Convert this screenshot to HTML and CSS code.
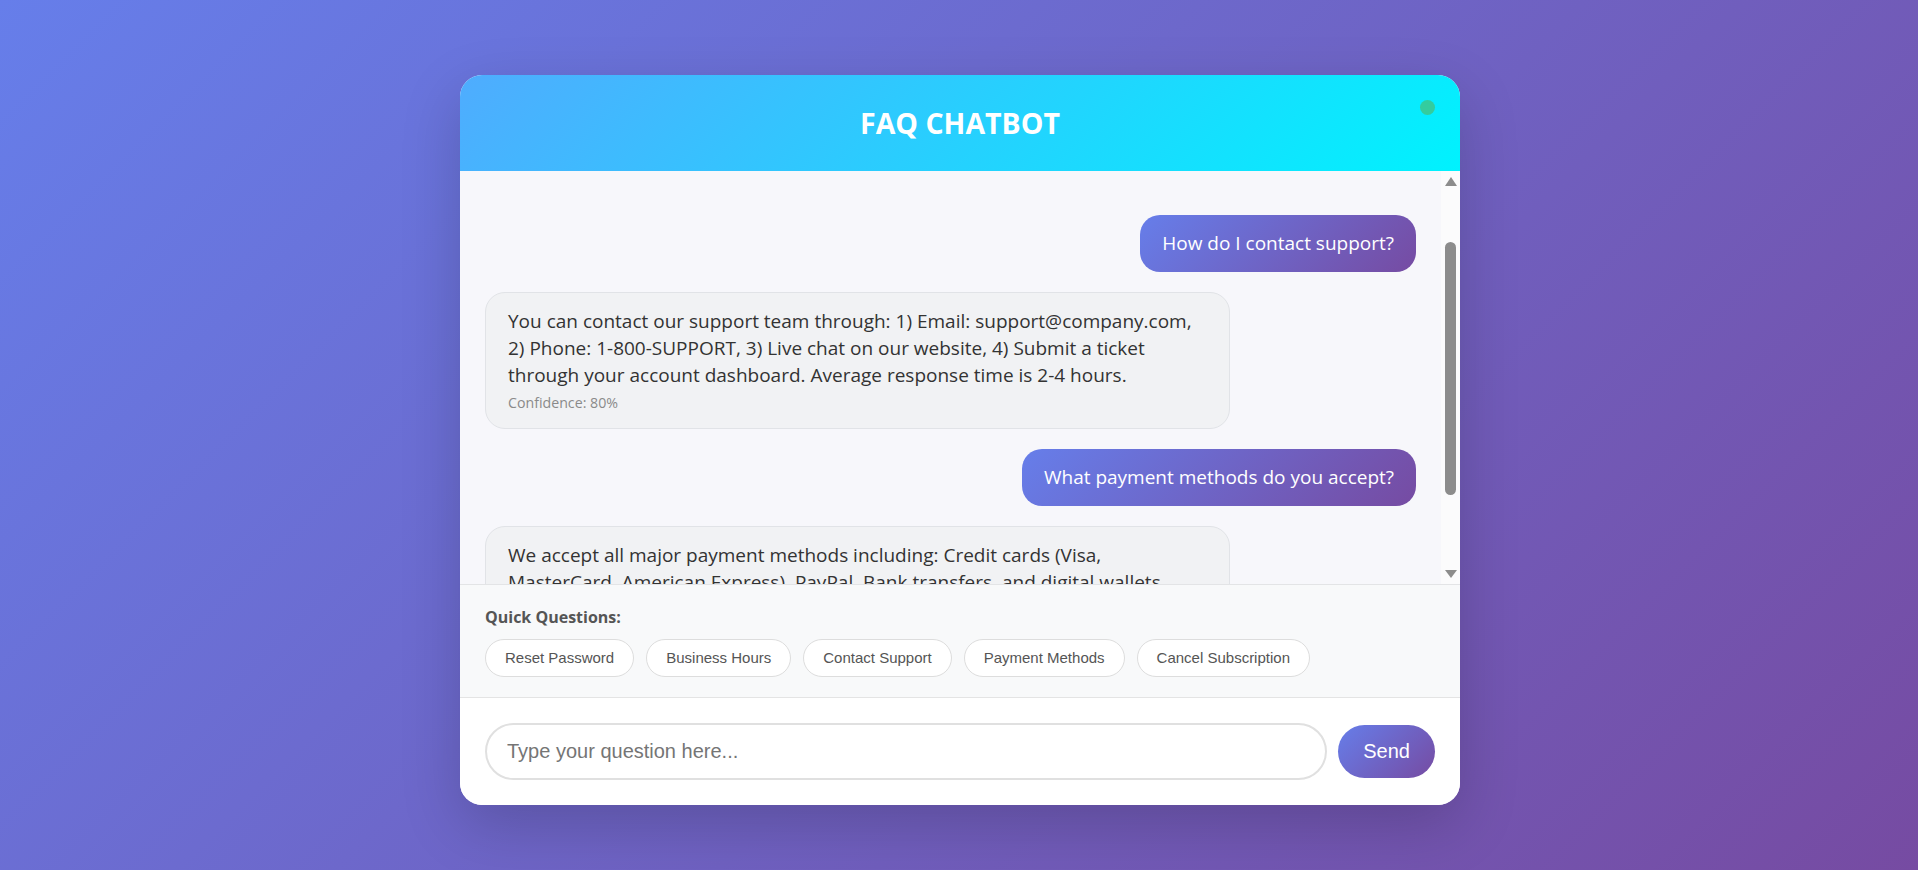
FILE: index.html
```html
<!DOCTYPE html>
<html lang="en">
<head>
<meta charset="utf-8">
<title>FAQ Chatbot</title>
<link rel="stylesheet" href="styles.css">
</head>
<body>
  <div class="chat">
    <header class="chat-header">
      <h1 class="chat-title">FAQ CHATBOT</h1>
      <span class="status-dot"></span>
    </header>

    <div class="chat-body">
      <div class="messages">
        <div class="msg msg-user">How do I contact support?</div>
        <div class="msg msg-bot">
          You can contact our support team through: 1) Email: support@company.com, 2) Phone: 1-800-SUPPORT, 3) Live chat on our website, 4) Submit a ticket through your account dashboard. Average response time is 2-4 hours.
          <div class="confidence">Confidence: 80%</div>
        </div>
        <div class="msg msg-user">What payment methods do you accept?</div>
        <div class="msg msg-bot">
          We accept all major payment methods including: Credit cards (Visa, MasterCard, American Express), PayPal, Bank transfers, and digital wallets (Apple Pay, Google Pay).
          <div class="confidence">Confidence: 85%</div>
        </div>
      </div>
      <div class="scrollbar" aria-hidden="true">
        <span class="sb-button"><span class="sb-arrow sb-arrow-up"></span></span>
        <div class="sb-track"><div class="sb-thumb"></div></div>
        <span class="sb-button"><span class="sb-arrow sb-arrow-down"></span></span>
      </div>
    </div>

    <div class="quick">
      <div class="quick-label">Quick Questions:</div>
      <div class="quick-list">
        <button class="quick-btn">Reset Password</button>
        <button class="quick-btn">Business Hours</button>
        <button class="quick-btn">Contact Support</button>
        <button class="quick-btn">Payment Methods</button>
        <button class="quick-btn">Cancel Subscription</button>
      </div>
    </div>

    <div class="composer">
      <input class="composer-input" type="text" placeholder="Type your question here...">
      <button class="send-btn">Send</button>
    </div>
  </div>
</body>
</html>
```
FILE: styles.css
```css
* { box-sizing: border-box; }

body {
  margin: 0;
  min-height: 100vh;
  padding: 10px 0 0 2px;
  display: flex;
  justify-content: center;
  align-items: center;
  background: linear-gradient(135deg, #667eea 0%, #764ba2 100%);
  font-family: "Open Sans", "Noto Sans", sans-serif;
}

.chat {
  width: 1000px;
  height: 730px;
  display: flex;
  flex-direction: column;
  background: #ffffff;
  border-radius: 22px;
  overflow: hidden;
  box-shadow: 0 20px 60px rgba(0, 0, 0, 0.18);
}

.chat-header {
  position: relative;
  height: 96px;
  flex: none;
  display: flex;
  align-items: center;
  justify-content: center;
  background: linear-gradient(135deg, #4facfe 0%, #00f2fe 100%);
}

.chat-title {
  margin: 0;
  color: #ffffff;
  font-size: 28.5px;
  font-weight: 700;
  line-height: 1.2;
}

.status-dot {
  position: absolute;
  top: 25px;
  right: 25px;
  width: 15px;
  height: 15px;
  border-radius: 50%;
  background: #34cc9e;
}

.chat-body {
  flex: 1;
  min-height: 0;
  display: flex;
  background: #f7f7fb;
}

.messages {
  flex: 1;
  min-width: 0;
  overflow: hidden;
  padding: 44px 25px 25px;
  display: flex;
  flex-direction: column;
}

.msg {
  flex: none;
  max-width: 80%;
  margin-bottom: 20px;
  padding: 15px 22px;
  border-radius: 20px;
  font-size: 19px;
  line-height: 27px;
}

.msg-user {
  align-self: flex-end;
  color: #ffffff;
  background: linear-gradient(135deg, #667eea 0%, #764ba2 100%);
}

.msg-bot {
  align-self: flex-start;
  color: #333333;
  background: #f1f2f4;
  border: 1px solid #e1e3e7;
}

.confidence {
  margin-top: 4px;
  font-size: 14.2px;
  line-height: 20px;
  color: #8a8a8a;
}

/* scrollbar of the message list */
.scrollbar {
  flex: none;
  width: 19px;
  display: flex;
  flex-direction: column;
  background: #fbfbfc;
}

.sb-button {
  flex: none;
  height: 21px;
  display: flex;
  align-items: center;
  justify-content: center;
}

.sb-arrow {
  width: 0;
  height: 0;
  border-left: 6px solid transparent;
  border-right: 6px solid transparent;
}

.sb-arrow-up { border-bottom: 9px solid #8c8c8c; }
.sb-arrow-down { border-top: 8px solid #8c8c8c; }

.sb-track {
  flex: 1;
  display: flex;
  justify-content: center;
  padding-top: 50px;
}

.sb-thumb {
  width: 11px;
  height: 253px;
  border-radius: 6px;
  background: #8c8c8c;
}

.quick {
  flex: none;
  padding: 20px 25px;
  background: #f8f9fa;
  border-top: 1px solid #e3e4e6;
}

.quick-label {
  margin-bottom: 10px;
  font-size: 16px;
  line-height: 24px;
  font-weight: 700;
  color: #555555;
}

.quick-list {
  display: flex;
  flex-wrap: wrap;
  gap: 12px;
}

.quick-btn {
  padding: 10px 19px;
  border: 1px solid #dddddd;
  border-radius: 20px;
  background: #ffffff;
  color: #555555;
  font-family: "Liberation Sans", Arial, sans-serif;
  font-size: 15px;
  line-height: 16px;
}

.composer {
  flex: none;
  display: flex;
  align-items: center;
  gap: 11px;
  padding: 25px;
  background: #ffffff;
  border-top: 1px solid #e4e4e4;
}

.composer-input {
  flex: 1;
  min-width: 0;
  padding: 15px 20px;
  border: 2px solid #e0e0e0;
  border-radius: 30px;
  font-family: "Liberation Sans", Arial, sans-serif;
  font-size: 20px;
  line-height: 23px;
  color: #333333;
  background: #ffffff;
  outline: none;
}

.composer-input::placeholder { color: #757575; }

.send-btn {
  padding: 15px 25px;
  border: none;
  border-radius: 27px;
  background: linear-gradient(135deg, #667eea 0%, #764ba2 100%);
  color: #ffffff;
  font-family: "Liberation Sans", Arial, sans-serif;
  font-size: 20px;
  line-height: 23px;
}
```
